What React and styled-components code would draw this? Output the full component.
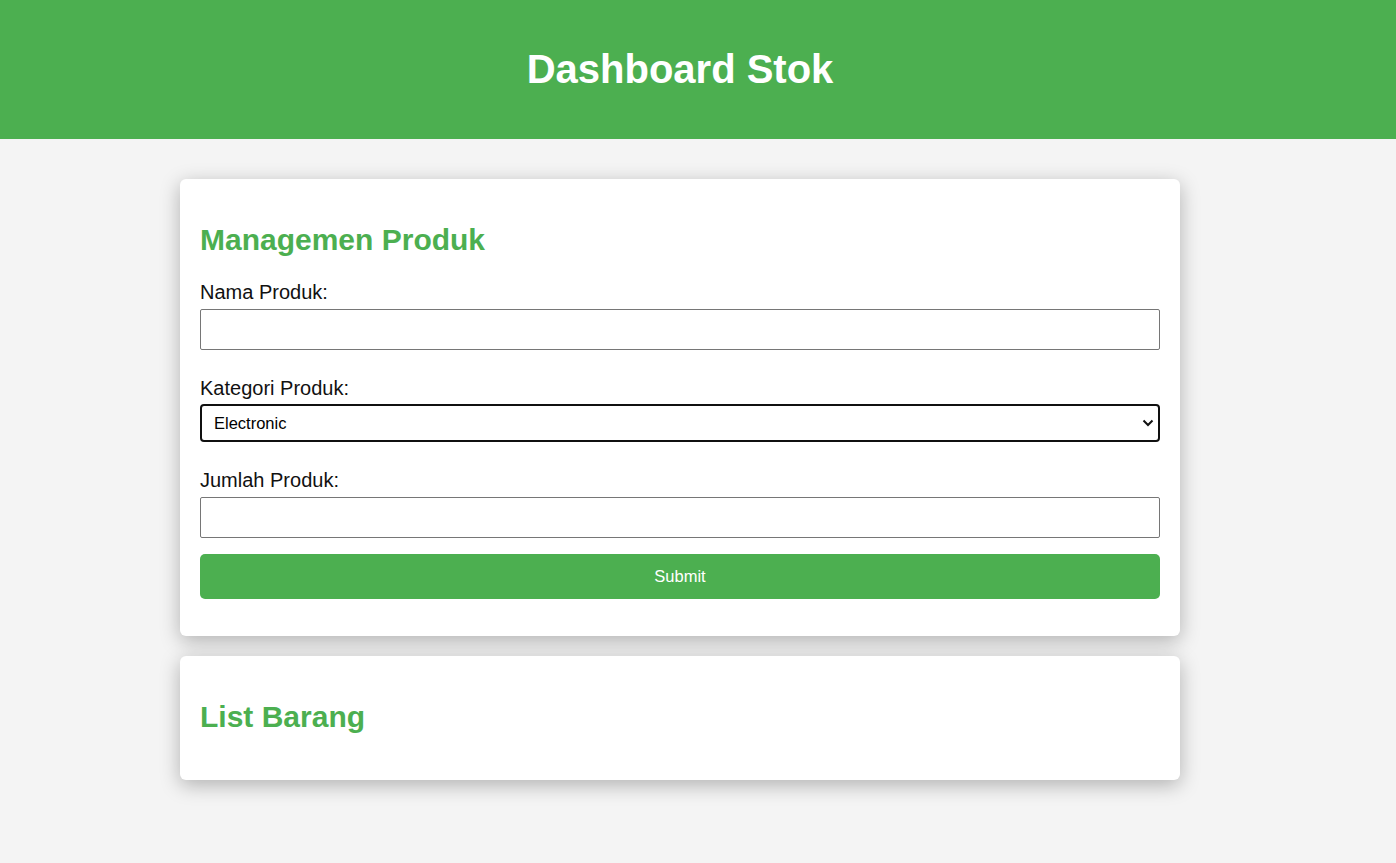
import React from 'react'
import styled, { createGlobalStyle } from 'styled-components'

const GlobalStyle = createGlobalStyle`
    body {
        margin: 0;
        background: #f4f4f4;
        font-family: 'Liberation Sans', Arial, sans-serif;
    }
`;

// the page was laid out as if 36px on the right were taken (scrollbar gutter)
const Header = styled.header`
    background: #4caf50;
    color: white;
    text-align: center;
    padding: 46px 36px 47px 0;

    h1 {
        margin: 0;
        font-size: 40px;
        line-height: 46px;
        font-weight: 700;
    }
`;

const Main = styled.div`
    padding-right: 36px;
`;

const Container = styled.main`
    width: 1000px;
    margin: 40px auto;
`;

const Card = styled.section`
    background: white;
    border-radius: 6px;
    padding: 20px 20px ${p => p.$bottom || 20}px;
    margin-bottom: 20px;
    box-shadow: 0 5px 20px rgba(0,0,0,0.28);

    h2 {
        margin: 24px 0 23.4px;
        font-size: 30px;
        line-height: 34.5px;
        color: #4caf50;
        font-weight: 700;
    }
`;

const Field = styled.div`
    margin-bottom: ${p => p.$gap}px;
`;

const Label = styled.label`
    display: block;
    font-size: 20px;
    line-height: 23px;
    color: #111;
    margin-bottom: ${p => p.$gap || 5}px;
`;

const TextInput = styled.input`
    display: block;
    box-sizing: border-box;
    width: 100%;
    height: 41px;
    margin: 0;
    border: 1px solid #767676;
    border-radius: 2px;
    padding: 0 10px;
    font-size: 16.5px;
    font-family: inherit;
    background: white;
`;

const SelectWrap = styled.div`
    position: relative;

    svg {
        position: absolute;
        right: 6px;
        top: 15px;
        pointer-events: none;
    }
`;

const Select = styled.select`
    display: block;
    box-sizing: border-box;
    width: 100%;
    height: 38px;
    margin: 0;
    appearance: none;
    border: 2px solid #101010;
    border-radius: 4px;
    padding: 0 12px;
    font-size: 16.5px;
    font-family: inherit;
    color: #000;
    background: white;
    outline: none;
`;

const Button = styled.button`
    display: block;
    width: 100%;
    height: 45px;
    border: none;
    border-radius: 5px;
    background: #4caf50;
    color: white;
    font-size: 16.5px;
    font-family: inherit;
    margin-bottom: 17px;
    cursor: pointer;
`;

const Chevron = () => (
    <svg width="12" height="8" viewBox="0 0 12 8">
        <path d="M1.5 1.5 L6 6 L10.5 1.5" fill="none" stroke="#111" strokeWidth="2" />
    </svg>
)

export default function App() {
    return (
        <>
            <GlobalStyle />
            <Header>
                <h1>Dashboard Stok</h1>
            </Header>
            <Main>
                <Container>
                    <Card>
                        <h2>Managemen Produk</h2>
                        <Field $gap={27}>
                            <Label>Nama Produk:</Label>
                            <TextInput type="text" />
                        </Field>
                        <Field $gap={27}>
                            <Label $gap={4}>Kategori Produk:</Label>
                            <SelectWrap>
                                <Select defaultValue="Electronic">
                                    <option>Electronic</option>
                                    <option>Fashion</option>
                                    <option>Makanan</option>
                                </Select>
                                <Chevron />
                            </SelectWrap>
                        </Field>
                        <Field $gap={16}>
                            <Label>Jumlah Produk:</Label>
                            <TextInput type="number" />
                        </Field>
                        <Button>Submit</Button>
                    </Card>
                    <Card $bottom={22}>
                        <h2>List Barang</h2>
                    </Card>
                </Container>
            </Main>
        </>
    )
}
